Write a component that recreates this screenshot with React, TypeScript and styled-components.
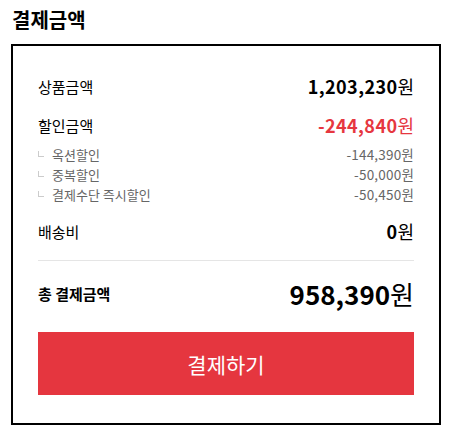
import React from "react";
import styled, { createGlobalStyle } from "styled-components";

const Global = createGlobalStyle`
  html, body { margin: 0; padding: 0; background: #fff; }
  body { font-family: "Noto Sans CJK KR", "Noto Sans", sans-serif; color: #000; }
`;

const Page = styled.div`
  padding: 6px 0 0 11px;
  width: 430px;
`;

const Title = styled.h2`
  margin: 0 0 11px 1px;
  font-size: 20px;
  font-weight: 700;
  line-height: 27px;
`;

const Box = styled.section`
  border: 2px solid #000;
  padding: 20px 25px 28px;
  display: flex;
  flex-direction: column;
`;

const Row = styled.div<{ $h: number; $mt?: number }>`
  display: flex;
  justify-content: space-between;
  align-items: center;
  height: ${(p) => p.$h}px;
  margin-top: ${(p) => p.$mt ?? 0}px;
`;

const Label = styled.span<{ $bold?: boolean }>`
  font-size: 15px;
  font-weight: ${(p) => (p.$bold ? 700 : 400)};
`;

const Value = styled.span<{ $red?: boolean; $size?: number; $ls?: number }>`
  font-size: ${(p) => p.$size ?? 18}px;
  font-weight: 700;
  color: ${(p) => (p.$red ? "#e6373f" : "#000")};
  letter-spacing: ${(p) => p.$ls ?? 0.4}px;
`;

const Won = styled.span`
  font-weight: 400;
  letter-spacing: 0;
`;

const SubRow = styled.div`
  display: flex;
  justify-content: space-between;
  align-items: center;
  height: 20px;
  font-size: 13px;
  color: #666;
`;

const SubLabel = styled.span`
  position: relative;
  padding-left: 14px;
  &::before {
    content: "";
    position: absolute;
    left: 0;
    top: 6px;
    width: 5px;
    height: 5px;
    border-left: 1px solid #ccc;
    border-bottom: 1px solid #ccc;
  }
`;

const SubValue = styled.span`
  font-size: 13.5px;
  letter-spacing: 0.2px;
`;

const Divider = styled.hr`
  border: 0;
  border-top: 1px solid #e5e5e5;
  margin: 9px 0 0;
`;

const PayButton = styled.button`
  margin-top: 19px;
  height: 63px;
  border: 0;
  background: #e5363f;
  color: #fff;
  font-family: inherit;
  font-size: 21px;
  font-weight: 400;
  cursor: pointer;
`;

export default function App() {
  return (
    <>
      <Global />
      <Page>
        <Title>결제금액</Title>
        <Box>
          <Row $h={40}>
            <Label>상품금액</Label>
            <Value>
              1,203,230<Won>원</Won>
            </Value>
          </Row>
          <Row $h={38}>
            <Label>할인금액</Label>
            <Value $red>
              -244,840<Won>원</Won>
            </Value>
          </Row>
          <SubRow>
            <SubLabel>옥션할인</SubLabel>
            <SubValue>-144,390원</SubValue>
          </SubRow>
          <SubRow>
            <SubLabel>중복할인</SubLabel>
            <SubValue>-50,000원</SubValue>
          </SubRow>
          <SubRow>
            <SubLabel>결제수단 즉시할인</SubLabel>
            <SubValue>-50,450원</SubValue>
          </SubRow>
          <Row $h={40} $mt={7}>
            <Label>배송비</Label>
            <Value>
              0<Won>원</Won>
            </Value>
          </Row>
          <Divider />
          <Row $h={40} $mt={12}>
            <Label $bold>총 결제금액</Label>
            <Value $size={26} $ls={0}>
              958,390<Won>원</Won>
            </Value>
          </Row>
          <PayButton>결제하기</PayButton>
        </Box>
      </Page>
    </>
  );
}
